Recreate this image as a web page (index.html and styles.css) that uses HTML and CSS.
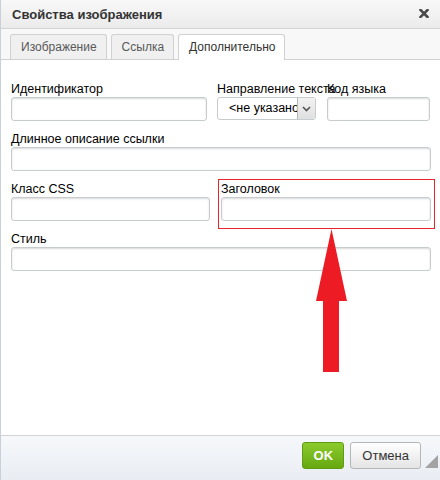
FILE: index.html
```html
<!DOCTYPE html>
<html lang="ru">
<head>
    <meta charset="UTF-8">
    <meta name="viewport" content="width=device-width, initial-scale=1.0">
    <title>Свойства изображения</title>
    <link rel="stylesheet" href="styles.css">
</head>
<body>
    <div class="dialog">
        <!-- Заголовок окна -->
        <div class="title-bar">
            <span class="title">Свойства изображения</span>
            <svg class="close" width="10" height="9" viewBox="0 0 10 9">
                <path d="M1.5 1 L8.5 8 M8.5 1 L1.5 8" stroke="#4a4a4a" stroke-width="2.6" stroke-linecap="square"/>
            </svg>
        </div>

        <!-- Вкладки -->
        <div class="tabs">
            <span class="tab">Изображение</span>
            <span class="tab">Ссылка</span>
            <span class="tab active">Дополнительно</span>
        </div>

        <!-- Содержимое вкладки -->
        <div class="body">
            <div class="row row-three">
                <div class="field">
                    <label>Идентификатор</label>
                    <input type="text">
                </div>
                <div class="field">
                    <label>Направление текста</label>
                    <div class="select">
                        <span class="select-text">&lt;не указано&gt;</span>
                        <span class="select-btn">
                            <svg width="9" height="6" viewBox="0 0 9 6">
                                <path d="M1 1 L4.5 4.5 L8 1" fill="none" stroke="#555" stroke-width="1.6"/>
                            </svg>
                        </span>
                    </div>
                </div>
                <div class="field">
                    <label>Код языка</label>
                    <input type="text">
                </div>
            </div>

            <div class="field">
                <label>Длинное описание ссылки</label>
                <input type="text">
            </div>

            <div class="row row-two">
                <div class="field">
                    <label>Класс CSS</label>
                    <input type="text">
                </div>
                <div class="field marked">
                    <label>Заголовок</label>
                    <input type="text">
                </div>
            </div>

            <div class="field">
                <label>Стиль</label>
                <input type="text">
            </div>

            <!-- Стрелка-указатель -->
            <svg class="arrow" width="31" height="143" viewBox="0 0 31 143">
                <polygon points="15.5,0 31,72 23,72 23,143 7,143 7,72 0,72" fill="#ed1c24"/>
            </svg>
        </div>

        <!-- Кнопки -->
        <div class="footer">
            <button class="btn btn-ok">OK</button>
            <button class="btn">Отмена</button>
            <svg class="grip" width="13" height="13" viewBox="0 0 13 13">
                <polygon points="13,0 13,13 0,13" fill="#a3a3a3"/>
            </svg>
        </div>
    </div>
</body>
</html>
```

FILE: styles.css
```css
body {
    margin: 0;
    font-family: "Liberation Sans", Arial, sans-serif;
    font-size: 12px;
    color: #000;
    background: #fff;
}
.dialog {
    width: 439px;
    height: 480px;
    border-left: 1px solid #c9d0da;
    display: flex;
    flex-direction: column;
    overflow: hidden;
}
.title-bar {
    height: 28px;
    border-bottom: 1px solid #d4d4d4;
    background: linear-gradient(#f8f8f8, #ebebeb);
    display: flex;
    align-items: center;
    justify-content: space-between;
    padding: 0 11px 0 11px;
}
.title {
    font-size: 13px;
    font-weight: bold;
    color: #333;
    padding-top: 1px;
}
.close {
    display: block;
    margin-top: -2px;
}
.tabs {
    height: 30px;
    background: #f8f8f8;
    border-bottom: 1px solid #d1d1d1;
    display: flex;
    align-items: flex-end;
    gap: 4px;
    padding-left: 9px;
}
.tab {
    height: 24px;
    line-height: 24px;
    padding: 0 9px 0 10px;
    border: 1px solid #d1d1d1;
    border-bottom: none;
    border-radius: 3px 3px 0 0;
    background: #f0f0f0;
    color: #595959;
    font-size: 12px;
}
.tab.active {
    background: #fff;
    color: #333;
    height: 25px;
    margin-bottom: -1px;
}
.body {
    flex: 1;
    position: relative;
    padding: 22px 0 0 10px;
    display: flex;
    flex-direction: column;
    gap: 11px;
}
.row {
    display: grid;
}
.row-three {
    grid-template-columns: 196px 99px 104px;
    column-gap: 10px;
}
.row-three .field:last-child {
    margin-left: 1px;
}
.row-two {
    grid-template-columns: 199px 210px;
    column-gap: 11px;
}
.field {
    display: flex;
    flex-direction: column;
    width: 420px;
}
.row .field {
    width: auto;
}
.field label {
    height: 15px;
    line-height: 14px;
    font-size: 12.5px;
    white-space: nowrap;
    color: #000;
}
.field input {
    box-sizing: border-box;
    width: 100%;
    height: 24px;
    margin: 0;
    border: 1px solid #c9cccf;
    border-radius: 3px;
    box-shadow: inset 0 1px 2px #d9d9d9;
    background: #fff;
}
.marked {
    position: relative;
}
.marked::after {
    content: "";
    position: absolute;
    left: -3px;
    right: -4px;
    top: -3px;
    bottom: -8px;
    border: 1px solid #e8232a;
}
.select {
    box-sizing: border-box;
    width: 99px;
    height: 23px;
    border: 1px solid #c9cccf;
    border-radius: 3px;
    display: flex;
    overflow: hidden;
    background: #fff;
}
.select-text {
    flex: 1;
    padding-left: 11px;
    line-height: 21px;
    font-size: 12.5px;
    white-space: nowrap;
    overflow: hidden;
}
.select-btn {
    width: 17px;
    border-left: 1px solid #b6b6b6;
    background: linear-gradient(#f2f2f2, #e0e0e0);
    display: flex;
    align-items: center;
    justify-content: center;
}
.arrow {
    position: absolute;
    left: 315px;
    top: 169px;
}
.footer {
    height: 38px;
    border-top: 1px solid #d3d3d3;
    background: linear-gradient(#f6f8fb, #e9edf3);
    display: flex;
    align-items: flex-start;
    justify-content: flex-end;
    gap: 6px;
    padding: 6px 19px 0 0;
    position: relative;
}
.btn {
    height: 27px;
    padding: 0 11px;
    border: 1px solid #b6b6b6;
    border-radius: 3px;
    background: linear-gradient(#ffffff, #e4e4e4);
    color: #333;
    font-family: "Liberation Sans", Arial, sans-serif;
    font-size: 13px;
    cursor: pointer;
}
.btn-ok {
    width: 42px;
    padding: 0;
    border-color: #5f9c13;
    background: linear-gradient(#8ccb2e, #65a810);
    color: #fff;
    font-weight: bold;
}
.grip {
    position: absolute;
    right: 2px;
    top: 19px;
}
```
